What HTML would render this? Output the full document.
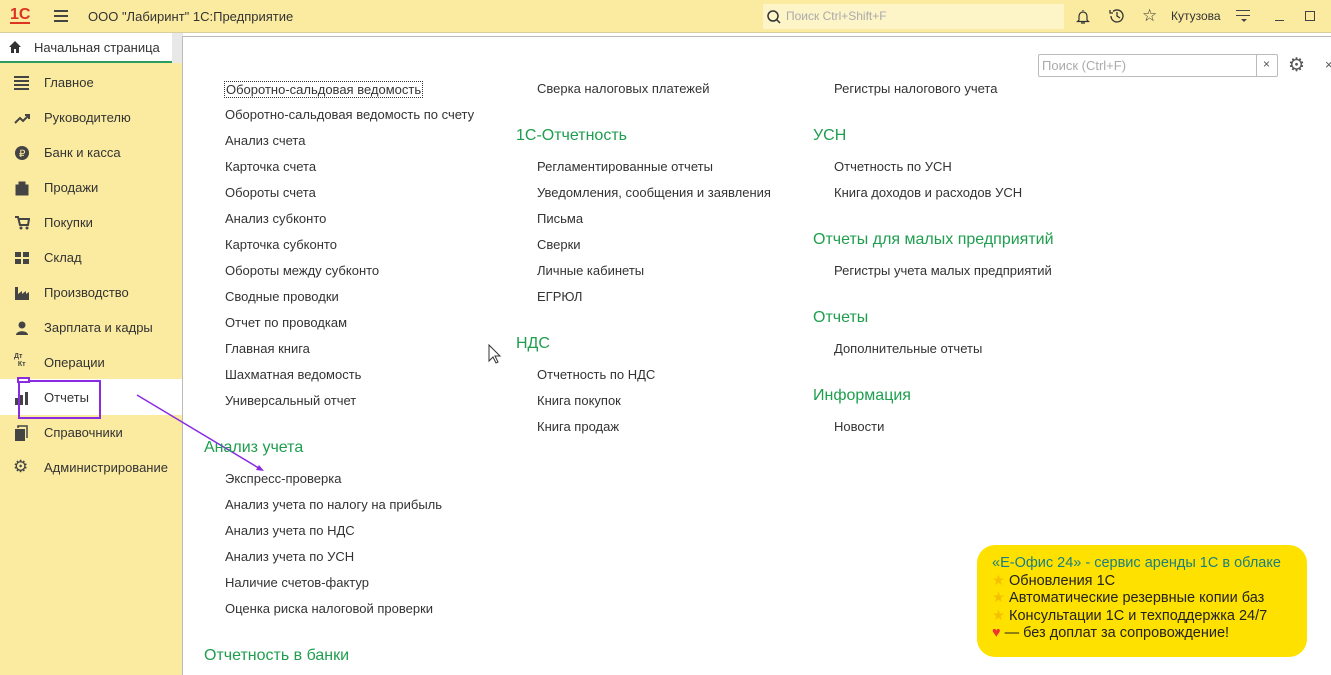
<!DOCTYPE html>
<html><head><meta charset="utf-8"><style>
*{margin:0;padding:0;box-sizing:border-box}
body{width:1331px;height:675px;overflow:hidden;font-family:"Liberation Sans",Arial,sans-serif;font-size:13px;color:#333;background:#fff;position:relative}
.top{position:absolute;left:0;top:0;width:1331px;height:33px;background:#fbeba0;border-bottom:1px solid #d8cfa0}
.abs{position:absolute;white-space:nowrap}
.tabbar{position:absolute;left:0;top:33px;width:183px;height:30px;background:#e8e8e8}
.tab{position:absolute;left:0;top:33px;width:172px;height:30px;background:#fff;border-bottom:2px solid #2b9d5f}
.side{position:absolute;left:0;top:63px;width:183px;height:612px;background:#fbeba0}
.content{position:absolute;left:182px;top:36px;width:1149px;height:639px;background:#fff;border-left:1px solid #bbb;border-top:1px solid #bbb}
.si{position:absolute;left:44px;font-size:13px;color:#333}
.ic{position:absolute;left:14px;width:16px;height:16px}
.l{position:absolute;white-space:nowrap;font-size:13px;color:#333}
.h{position:absolute;white-space:nowrap;font-size:16px;color:#1e9e4e}
</style></head><body>
<div class="top"></div>
<div class="abs" style="left:10px;top:7px;font-weight:bold;color:#d32;font-size:16px;border-bottom:2px solid #d32;line-height:15px">1С</div>
<div class="abs" style="left:54px;top:10px;width:14px;height:2px;background:#444;box-shadow:0 5px 0 #444,0 10px 0 #444"></div>
<div class="abs" style="left:88px;top:9px;font-size:13px">ООО "Лабиринт" 1С:Предприятие</div>
<div class="abs" style="left:763px;top:4px;width:301px;height:25px;background:#fdf4c8"></div>
<svg class="abs" style="left:766px;top:9px" width="16" height="16"><circle cx="7" cy="7" r="5" fill="none" stroke="#333" stroke-width="1.5"/><line x1="10.5" y1="10.5" x2="14" y2="14" stroke="#333" stroke-width="1.5"/></svg>
<div class="abs" style="left:786px;top:9px;color:#aaa;font-size:12px">Поиск Ctrl+Shift+F</div>
<svg class="abs" style="left:1074px;top:8px" width="18" height="18"><path d="M9 2v1M5 12V8a4 4 0 018 0v4l1.5 1.5h-11z M7 15h4" fill="none" stroke="#333" stroke-width="1.2"/></svg>
<svg class="abs" style="left:1108px;top:7px" width="18" height="18"><path d="M3 9a6 6 0 1 0 2-4.5M2 3v3h3M9 5v4l3 2" fill="none" stroke="#333" stroke-width="1.3"/></svg>
<div class="abs" style="left:1142px;top:6px;font-size:17px;color:#333">☆</div>
<div class="abs" style="left:1171px;top:9px;font-size:12px">Кутузова</div>
<div class="abs" style="left:1236px;top:10px;width:14px;height:1px;background:#444;box-shadow:0 5px 0 #444"></div>
<div class="abs" style="left:1241px;top:19px;border:3px solid transparent;border-top:3px solid #444"></div>
<div class="abs" style="left:1275px;top:20px;width:9px;height:1px;background:#444"></div>
<div class="abs" style="left:1305px;top:11px;width:10px;height:10px;border:1px solid #444"></div>

<div class="tabbar"></div>
<div class="tab"></div>
<svg class="abs" style="left:8px;top:40px" width="14" height="14"><path d="M7 1L1 7h2v6h3V9h2v4h3V7h2z" fill="#333"/></svg>
<div class="abs" style="left:34px;top:40px;font-size:13px">Начальная страница</div>

<div class="side"></div>
<div class="abs" style="left:0;top:379px;width:182px;height:36px;background:#fff"></div>
<div class="ic" style="top:75px"><div style="width:15px;height:2px;background:#444;margin-top:1px;box-shadow:0 4px 0 #444,0 8px 0 #444,0 12px 0 #444"></div></div>
<div class="si" style="top:75px">Главное</div>
<svg class="ic" style="top:110px"><path d="M1 13l5-5 3 3 6-6M11 5h4v4" fill="none" stroke="#444" stroke-width="2"/></svg>
<div class="si" style="top:110px">Руководителю</div>
<svg class="ic" style="top:145px"><circle cx="8" cy="8" r="7" fill="#444"/><text x="5" y="12" font-size="10" fill="#fbeba0" font-family="Liberation Sans">₽</text></svg>
<div class="si" style="top:145px">Банк и касса</div>
<svg class="ic" style="top:180px"><path d="M2 5h12v10H2z M5 5V2h6v3" fill="#444" stroke="#444"/></svg>
<div class="si" style="top:180px">Продажи</div>
<svg class="ic" style="top:215px"><path d="M1 2h3l2 8h8l1-6H5" fill="none" stroke="#444" stroke-width="2"/><circle cx="7" cy="13" r="1.5" fill="#444"/><circle cx="13" cy="13" r="1.5" fill="#444"/></svg>
<div class="si" style="top:215px">Покупки</div>
<svg class="ic" style="top:250px"><rect x="1" y="2" width="6" height="5" fill="#444"/><rect x="9" y="2" width="6" height="5" fill="#444"/><rect x="1" y="9" width="6" height="5" fill="#444"/><rect x="9" y="9" width="6" height="5" fill="#444"/></svg>
<div class="si" style="top:250px">Склад</div>
<svg class="ic" style="top:285px"><path d="M1 15V2h3v7l4-3v3l4-3v3l3-2v8z" fill="#444"/></svg>
<div class="si" style="top:285px">Производство</div>
<svg class="ic" style="top:320px"><circle cx="8" cy="5" r="3.5" fill="#444"/><path d="M2 15c0-5 12-5 12 0z" fill="#444"/></svg>
<div class="si" style="top:320px">Зарплата и кадры</div>
<div class="abs" style="left:14px;top:353px;font-size:7px;font-weight:bold;line-height:8px;color:#444">Дт<br>&nbsp;&nbsp;Кт</div>
<div class="si" style="top:355px">Операции</div>
<svg class="ic" style="top:390px"><rect x="1" y="8" width="3" height="7" fill="#444"/><rect x="6" y="5" width="3" height="10" fill="#444"/><rect x="11" y="2" width="3" height="13" fill="#444"/></svg>
<div class="si" style="top:390px">Отчеты</div>
<svg class="ic" style="top:425px"><rect x="1" y="4" width="10" height="12" fill="#444"/><path d="M4 3V1h9v12" fill="none" stroke="#444" stroke-width="1.5"/></svg>
<div class="si" style="top:425px">Справочники</div>
<div class="abs" style="left:13px;top:457px;font-size:17px;color:#444">⚙</div>
<div class="si" style="top:460px">Администрирование</div>
<div class="abs" style="left:18px;top:380px;width:83px;height:39px;border:2px solid #8a2be2"></div>
<div class="abs" style="left:17px;top:377px;width:13px;height:6px;border:2px solid #8a2be2;background:#fff"></div>

<div class="content"></div>
<div class="abs" style="left:1038px;top:54px;width:240px;height:23px;border:1px solid #bbb;border-radius:2px"></div>
<div class="abs" style="left:1256px;top:54px;width:1px;height:23px;background:#bbb"></div>
<div class="abs" style="left:1042px;top:58px;color:#aaa;font-size:13px">Поиск (Ctrl+F)</div>
<div class="abs" style="left:1263px;top:57px;color:#555;font-size:12px">×</div>
<div class="abs" style="left:1288px;top:54px;font-size:19px;color:#555">⚙</div>
<div class="abs" style="left:1325px;top:57px;color:#555;font-size:13px">×</div>

<svg class="abs" style="left:0;top:0" width="1331" height="675"><line x1="137" y1="395" x2="262" y2="470" stroke="#8a2be2" stroke-width="1.5"/><path d="M264 471l-8-1 3-5z" fill="#8a2be2"/><path d="M489 345v16l4-4 3 6 2-1-3-6h5z" fill="#fff" stroke="#333"/></svg>

<div class="l" style="left:225px;top:81px;border:1px dotted #333;padding:0 1px;margin-left:-1px">Оборотно-сальдовая ведомость</div>
<div class="l" style="left:225px;top:107px">Оборотно-сальдовая ведомость по счету</div>
<div class="l" style="left:225px;top:133px">Анализ счета</div>
<div class="l" style="left:225px;top:159px">Карточка счета</div>
<div class="l" style="left:225px;top:185px">Обороты счета</div>
<div class="l" style="left:225px;top:211px">Анализ субконто</div>
<div class="l" style="left:225px;top:237px">Карточка субконто</div>
<div class="l" style="left:225px;top:263px">Обороты между субконто</div>
<div class="l" style="left:225px;top:289px">Сводные проводки</div>
<div class="l" style="left:225px;top:315px">Отчет по проводкам</div>
<div class="l" style="left:225px;top:341px">Главная книга</div>
<div class="l" style="left:225px;top:367px">Шахматная ведомость</div>
<div class="l" style="left:225px;top:393px">Универсальный отчет</div>
<div class="h" style="left:204px;top:439px">Анализ учета</div>
<div class="l" style="left:225px;top:471px">Экспресс-проверка</div>
<div class="l" style="left:225px;top:497px">Анализ учета по налогу на прибыль</div>
<div class="l" style="left:225px;top:523px">Анализ учета по НДС</div>
<div class="l" style="left:225px;top:549px">Анализ учета по УСН</div>
<div class="l" style="left:225px;top:575px">Наличие счетов-фактур</div>
<div class="l" style="left:225px;top:601px">Оценка риска налоговой проверки</div>
<div class="h" style="left:204px;top:647px">Отчетность в банки</div>

<div class="l" style="left:537px;top:81px">Сверка налоговых платежей</div>
<div class="h" style="left:516px;top:127px">1С-Отчетность</div>
<div class="l" style="left:537px;top:159px">Регламентированные отчеты</div>
<div class="l" style="left:537px;top:185px">Уведомления, сообщения и заявления</div>
<div class="l" style="left:537px;top:211px">Письма</div>
<div class="l" style="left:537px;top:237px">Сверки</div>
<div class="l" style="left:537px;top:263px">Личные кабинеты</div>
<div class="l" style="left:537px;top:289px">ЕГРЮЛ</div>
<div class="h" style="left:516px;top:335px">НДС</div>
<div class="l" style="left:537px;top:367px">Отчетность по НДС</div>
<div class="l" style="left:537px;top:393px">Книга покупок</div>
<div class="l" style="left:537px;top:419px">Книга продаж</div>

<div class="l" style="left:834px;top:81px">Регистры налогового учета</div>
<div class="h" style="left:813px;top:127px">УСН</div>
<div class="l" style="left:834px;top:159px">Отчетность по УСН</div>
<div class="l" style="left:834px;top:185px">Книга доходов и расходов УСН</div>
<div class="h" style="left:813px;top:231px">Отчеты для малых предприятий</div>
<div class="l" style="left:834px;top:263px">Регистры учета малых предприятий</div>
<div class="h" style="left:813px;top:309px">Отчеты</div>
<div class="l" style="left:834px;top:341px">Дополнительные отчеты</div>
<div class="h" style="left:813px;top:387px">Информация</div>
<div class="l" style="left:834px;top:419px">Новости</div>

<div class="abs" style="left:977px;top:545px;width:330px;height:112px;background:#ffe100;border-radius:18px;padding:10px 0 0 15px;font-size:14.5px;line-height:17.5px;color:#222">
<div style="color:#1a7f80">«Е-Офис 24» - сервис аренды 1С в облаке</div>
<div><span style="color:#f5c000">★</span> Обновления 1С</div>
<div><span style="color:#f5c000">★</span> Автоматические резервные копии баз</div>
<div><span style="color:#f5c000">★</span> Консультации 1С и техподдержка 24/7</div>
<div><span style="color:#e33">♥</span> — без доплат за сопровождение!</div>
</div>
</body></html>
